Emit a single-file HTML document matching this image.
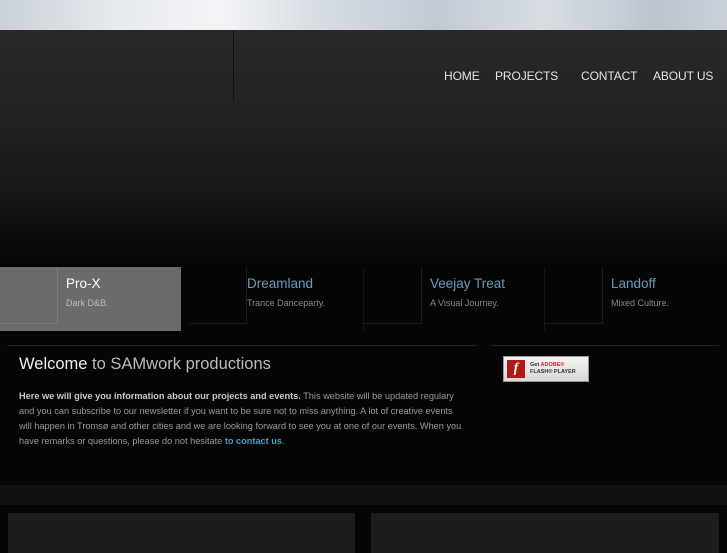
<!DOCTYPE html>
<html><head><style>
body{margin:0;width:727px;height:545px;overflow:hidden;background:#050505;font-family:"Liberation Sans",sans-serif;position:relative}
div{position:absolute;box-sizing:border-box}
.top{left:0;top:0;width:727px;height:30px;background:linear-gradient(90deg,#c9d0d8,#e6e9ed 15%,#f3f4f6 30%,#d5dbe2 45%,#c2cad4 60%,#d8dde3 75%,#bcc5cf 90%,#c9d0d8)}
.hdr{left:0;top:30px;width:727px;height:230px;background:linear-gradient(#282828,#222 40%,#171717 70%,#0a0a0a 92%,#060606)}
.nav{top:69px;font-size:12px;color:#e4e4e4;letter-spacing:-0.1px}
.tab{top:267px;height:64px;width:181px}
.tab .t{left:66px;top:9px;font-size:13.5px;color:#6a9ab4}
.tab .s{left:66px;top:31px;font-size:9px;color:#8a8a8a}
.tab .l{left:0px;top:0;width:58px;height:57px;border-right:1px solid #1c1c1c;border-bottom:1px solid #1c1c1c}
p{margin:0}
</style></head><body>
<div class="top"></div>
<div class="hdr"></div>
<div style="left:233px;top:30px;width:1px;height:72px;background:#111"></div>
<div class="nav" style="left:444px">HOME</div>
<div class="nav" style="left:495px">PROJECTS</div>
<div class="nav" style="left:581px">CONTACT</div>
<div class="nav" style="left:653px">ABOUT US</div>

<div class="tab" style="left:0;background:#6b6b6b"><div class="l" style="border-color:#7a7a7a"></div><div class="t" style="color:#fff">Pro-X</div><div class="s" style="color:#bbb">Dark D&amp;B.</div></div>
<div class="tab" style="left:181px"><div class="l" style="left:8px"></div><div class="t">Dreamland</div><div class="s">Trance Danceparty.</div></div>
<div class="tab" style="left:363px;border-left:1px solid #151515"><div class="l" style="left:0"></div><div class="t">Veejay Treat</div><div class="s">A Visual Journey.</div></div>
<div class="tab" style="left:544px;border-left:1px solid #151515"><div class="l" style="left:0"></div><div class="t">Landoff</div><div class="s">Mixed Culture.</div></div>

<div style="left:7px;top:345px;width:470px;height:1px;background:#222"></div>
<div style="left:491px;top:345px;width:228px;height:1px;background:#222"></div>

<div style="left:19px;top:355px;font-size:16.5px;color:#bbb"><span style="color:#eee">Welcome</span> to SAMwork productions</div>
<div style="left:19px;top:389px;width:448px;font-size:9.2px;line-height:15px;color:#9a9a9a"><p><b style="color:#c8c8c8">Here we will give you information about our projects and events.</b> This website will be updated regulary and you can subscribe to our newsletter if you want to be sure not to miss anything. A lot of creative events will happen in Tromsø and other cities and we are looking forward to see you at one of our events. When you have remarks or questions, please do not hesitate <b style="color:#4d9ec4">to contact us</b>.</p></div>

<div style="left:503px;top:356px;width:86px;height:26px;background:linear-gradient(#f4f4f4,#d8d8d8);border:1px solid #999">
 <div style="left:3px;top:3px;width:18px;height:18px;background:#b01a14;color:#fff;font:italic bold 14px 'Liberation Serif',serif;text-align:center;line-height:18px">f</div>
 <div style="left:26px;top:5px;font-size:5.5px;line-height:7px;color:#333;font-weight:bold">Get <span style="color:#d22">ADOBE®</span><br>FLASH® PLAYER</div>
</div>

<div style="left:0;top:485px;width:727px;height:20px;background:#111"></div>
<div style="left:8px;top:513px;width:347px;height:40px;background:#1c1c1c"></div>
<div style="left:371px;top:513px;width:348px;height:40px;background:#1c1c1c"></div>
</body></html>
